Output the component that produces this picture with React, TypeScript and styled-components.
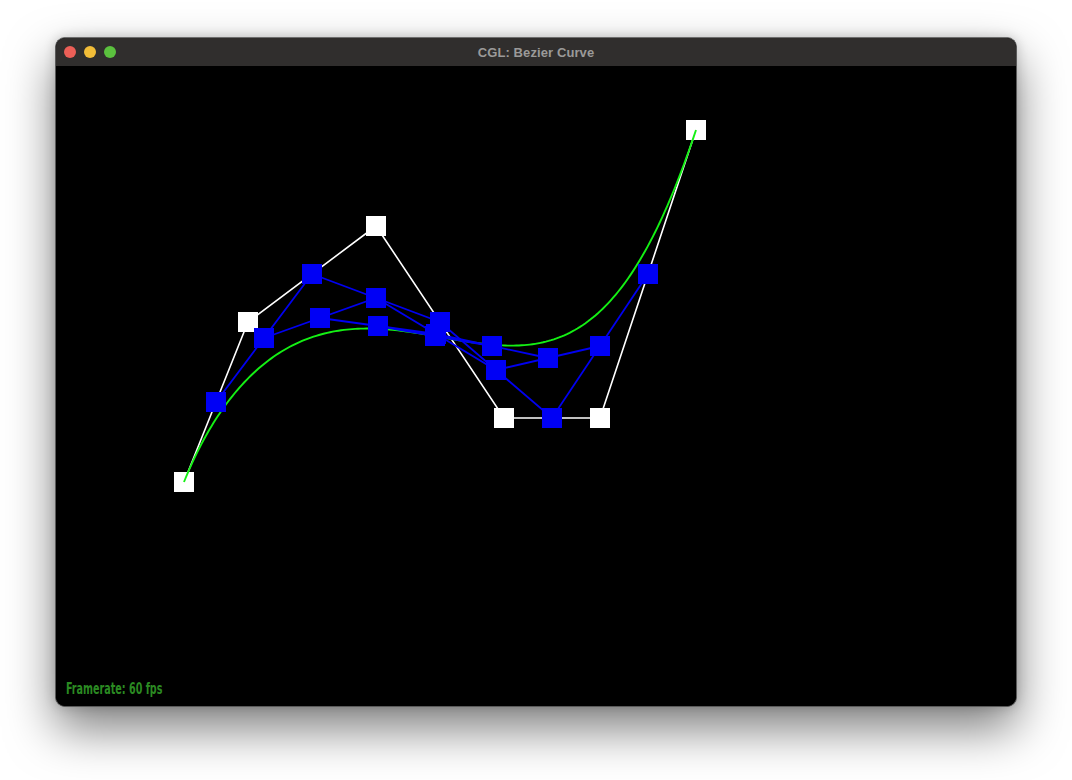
import * as React from 'react'
import styled, { createGlobalStyle } from 'styled-components'

const GlobalStyle = createGlobalStyle`
  html, body {
    margin: 0;
    padding: 0;
    background: #ffffff;
  }
`

const Page = styled.div`
  width: 1072px;
  height: 780px;
  padding: 37px 0 0 55px;
  box-sizing: border-box;
  overflow: hidden;
`

const Window = styled.div`
  width: 960px;
  border: 1px solid #5a5a5a;
  border-top-color: #6e6e6e;
  border-radius: 10px;
  overflow: hidden;
  background: #000;
  box-shadow: 0 22px 48px rgba(0, 0, 0, 0.5), 0 0 12px rgba(0, 0, 0, 0.18);
`

const TitleBar = styled.div`
  position: relative;
  height: 28px;
  background: #302e2d;
  display: flex;
  align-items: center;
  justify-content: center;
`

const Lights = styled.div`
  position: absolute;
  left: 8px;
  top: 8px;
  display: flex;
  gap: 8px;
`

const Light = styled.span<{ $color: string }>`
  width: 12px;
  height: 12px;
  border-radius: 50%;
  background: ${p => p.$color};
`

const Title = styled.div`
  font-family: 'Liberation Sans', Arial, sans-serif;
  font-weight: bold;
  font-size: 13px;
  color: #9b9a99;
  letter-spacing: 0.1px;
`

const Canvas = styled.div`
  position: relative;
  width: 960px;
  height: 640px;
  background: #000;
  svg {
    display: block;
  }
`

const Framerate = styled.div`
  position: absolute;
  left: 10px;
  bottom: 9px;
  font-family: 'DejaVu Sans Condensed', 'DejaVu Sans', sans-serif;
  font-stretch: condensed;
  font-weight: bold;
  font-size: 15px;
  line-height: 15px;
  white-space: nowrap;
  color: #2b8a22;
  transform: scaleX(0.71);
  transform-origin: left center;
`

type Pt = [number, number]

const controls: Pt[] = [
  [128, 416],
  [192, 256],
  [320, 160],
  [448, 352],
  [544, 352],
  [640, 64],
]

const lerp = (a: Pt, b: Pt, t: number): Pt => [a[0] + (b[0] - a[0]) * t, a[1] + (b[1] - a[1]) * t]

// every de Casteljau level below the control polygon
const levels = (pts: Pt[], t: number): Pt[][] => {
  const out: Pt[][] = []
  let cur = pts
  while (cur.length > 1) {
    const next: Pt[] = []
    for (let i = 0; i < cur.length - 1; i++) next.push(lerp(cur[i], cur[i + 1], t))
    out.push(next)
    cur = next
  }
  return out
}

const evaluate = (pts: Pt[], t: number): Pt => {
  const l = levels(pts, t)
  return l[l.length - 1][0]
}

const toPoints = (pts: Pt[]) => pts.map(p => `${p[0]},${p[1]}`).join(' ')

const Square = ({ p, fill }: { p: Pt; fill: string }) => (
  <rect x={p[0] - 10} y={p[1] - 10} width={20} height={20} fill={fill} />
)

const Bezier = () => {
  const inner = levels(controls, 0.5)
  const curve: Pt[] = []
  for (let i = 0; i <= 200; i++) curve.push(evaluate(controls, i / 200))

  return (
    <svg width={960} height={640} viewBox="0 0 960 640">
      <polyline points={toPoints(controls)} fill="none" stroke="#fff" strokeWidth={1.6} />
      {controls.map((p, i) => <Square key={i} p={p} fill="#fff" />)}
      <polyline points={toPoints(curve)} fill="none" stroke="#14f014" strokeWidth={1.9} />
      {inner.map((lvl, i) => (
        <polyline key={i} points={toPoints(lvl)} fill="none" stroke="#0000f0" strokeWidth={1.8} />
      ))}
      {inner.map((lvl, i) => lvl.map((p, j) => <Square key={`${i}-${j}`} p={p} fill="#0000f5" />))}
    </svg>
  )
}

export default function App() {
  return (
    <Page>
      <GlobalStyle />
      <Window>
        <TitleBar>
          <Lights>
            <Light $color="#ec5f57" />
            <Light $color="#f2bd38" />
            <Light $color="#5bc13e" />
          </Lights>
          <Title>CGL: Bezier Curve</Title>
        </TitleBar>
        <Canvas>
          <Bezier />
          <Framerate>Framerate: 60 fps</Framerate>
        </Canvas>
      </Window>
    </Page>
  )
}
